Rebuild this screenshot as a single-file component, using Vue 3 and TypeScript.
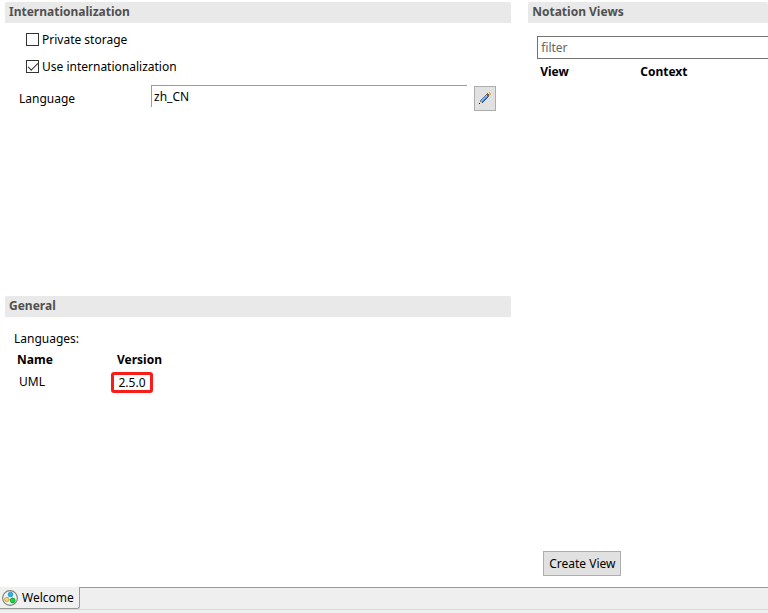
<script setup lang="ts">
import { ref } from 'vue'

interface LanguageEntry {
  name: string
  version: string
}

const privateStorage = ref(false)
const useInternationalization = ref(true)
const language = ref('zh_CN')
const filter = ref('')
const languages: LanguageEntry[] = [{ name: 'UML', version: '2.5.0' }]
</script>

<template>
  <div class="editor">
    <main class="pages">
      <div class="left">
        <section>
          <h2 class="heading">Internationalization</h2>
          <div class="form">
            <label class="check">
              <input v-model="privateStorage" type="checkbox" />
              <span>Private storage</span>
            </label>
            <label class="check">
              <input v-model="useInternationalization" type="checkbox" />
              <span>Use internationalization</span>
            </label>
            <div class="field">
              <label for="language">Language</label>
              <input id="language" v-model="language" class="language" type="text" />
              <button class="edit" type="button" aria-label="Edit language">
                <svg width="14" height="13" viewBox="0 0 14 13" shape-rendering="crispEdges">
                  <path d="M7 3h1v1h-1zM6 4h1v1h-1zM5 5h1v1h-1zM4 6h1v1h-1zM3 7h1v1h-1zM2 8h1v2h-1z" fill="#5c7fae" />
                  <path d="M8 3h1v1h-1zM7 4h2v1h-2zM6 5h2v1h-2zM5 6h2v1h-2zM4 7h2v1h-2zM3 8h2v1h-2zM3 9h1v1h-1z" fill="#7fb2e8" />
                  <path d="M9 4h1v1h-1zM8 5h1v1h-1zM7 6h1v1h-1zM6 7h1v1h-1zM5 8h1v1h-1zM4 9h1v1h-1z" fill="#4b7fd0" />
                  <path d="M9 5h1v1h-1zM8 6h1v1h-1zM7 7h1v1h-1zM6 8h1v1h-1zM5 9h1v1h-1zM4 10h1v1h-1z" fill="#27479c" />
                  <path d="M9 1h1v1h-1zM8 2h3v1h-3zM9 3h2v1h-2zM10 4h1v1h-1z" fill="#67696a" />
                  <path d="M10 0h2v1h-2zM10 1h3v1h-3zM11 2h2v1h-2zM11 3h1v1h-1zM2 10h2v1h-2z" fill="#f5b04a" />
                  <path d="M10 0h1v2h-1zM2 10h1v1h-1z" fill="#ffdf9b" />
                  <path d="M1 11h1v1h-1z" fill="#111" />
                </svg>
              </button>
            </div>
          </div>
        </section>

        <section>
          <h2 class="heading">General</h2>
          <div class="general">
            <p id="languages-title" class="caption">Languages:</p>
            <table class="grid-table" aria-labelledby="languages-title">
              <thead>
                <tr>
                  <th>Name</th>
                  <th>Version</th>
                </tr>
              </thead>
              <tbody>
                <tr v-for="entry in languages" :key="entry.name">
                  <td>{{ entry.name }}</td>
                  <td><span class="marked">{{ entry.version }}</span></td>
                </tr>
              </tbody>
            </table>
          </div>
        </section>
      </div>

      <section class="views">
        <h2 class="heading">Notation Views</h2>
        <input v-model="filter" class="filter" type="text" placeholder="filter" aria-label="filter" />
        <table class="grid-table views-table">
          <thead>
            <tr>
              <th>View</th>
              <th>Context</th>
            </tr>
          </thead>
        </table>
        <button class="create" type="button">Create View</button>
      </section>
    </main>

    <footer class="tabs">
      <div class="tab-row">
        <button class="tab" type="button">
          <svg width="16" height="16" viewBox="0 0 16 16">
            <circle cx="8" cy="8" r="7.4" fill="#e9f3f5" stroke="#7d8274" stroke-width="1.1" />
            <path d="M8.5 4.5L4.5 9.5h6.5z" fill="none" stroke="#bfd3da" />
            <circle cx="8.5" cy="4.5" r="2.3" fill="#22b4ea" stroke="#2484bb" stroke-width=".7" />
            <circle cx="4.7" cy="9.5" r="2.2" fill="#f6d676" stroke="#b8923a" stroke-width=".7" />
            <circle cx="10.7" cy="10.5" r="2.4" fill="#16d83b" stroke="#0b8f2b" stroke-width=".8" />
          </svg>
          <span>Welcome</span>
        </button>
        <div class="tab-space"></div>
      </div>
    </footer>
  </div>
</template>

<style>
body {
  margin: 0;
  background: #fff;
}
</style>

<style scoped>
.editor {
  display: flex;
  flex-direction: column;
  min-height: 100vh;
  color: #000;
  font: 12px/20px "Noto Sans", "Open Sans", sans-serif;
}

.editor *,
.editor {
  box-sizing: border-box;
}

input,
button {
  margin: 0;
  font: inherit;
  color: inherit;
  border-radius: 0;
}

.pages {
  flex: 1;
  display: grid;
  grid-template-columns: 19fr 9fr;
  gap: 17px;
  padding: 2px 0 0 5px;
}

.left {
  display: grid;
  grid-template-rows: 1fr 1fr;
  gap: 3px;
  min-width: 0;
}

.heading {
  margin: 0;
  padding: 0 4px;
  height: 21px;
  background: #e9e9e9;
  border-radius: 2px 2px 0 0;
  color: #505050;
  font-size: 12px;
  font-weight: 700;
  line-height: 20px;
}

.form {
  padding: 6px 15px 0 14px;
}

.check {
  display: flex;
  align-items: center;
  gap: 3px;
  width: max-content;
  height: 20px;
  margin: 0 0 7px 7px;
}

.check span {
  padding-top: 2px;
}

.check input {
  display: grid;
  place-items: center;
  width: 13px;
  height: 13px;
  appearance: none;
  border: 1px solid #333;
  background: #fff;
}

.check input:checked::before {
  content: "";
  width: 9px;
  height: 4px;
  border: solid #333;
  border-width: 0 0 1px 1px;
  transform: translateY(-1px) rotate(-45deg);
}

.field {
  display: grid;
  grid-template-columns: 125px 1fr 22px;
  column-gap: 7px;
  align-items: start;
  padding-top: 2px;
}

.field label {
  padding-top: 4px;
}

.language {
  width: 100%;
  height: 22px;
  padding: 0 2px;
  border: solid #9b9b9b;
  border-width: 1px 0 0 1px;
  outline: 0;
}

.edit {
  display: grid;
  place-items: center;
  width: 22px;
  height: 25px;
  margin-top: 1px;
  padding: 0;
  border: 1px solid #adadad;
  background: #e1e1e1;
}

.general {
  padding: 12px 9px 0;
}

.caption {
  margin: 0;
}

.grid-table {
  table-layout: fixed;
  width: 200px;
  border-collapse: collapse;
  text-align: left;
}

.grid-table th {
  padding: 1px 3px 0;
}

.grid-table td {
  padding: 2px 5px 0;
  vertical-align: top;
}

.grid-table td:last-child {
  padding: 2px 0 0;
}

.marked {
  display: block;
  width: 42px;
  margin-left: -3px;
  border: 3px solid #f81d16;
  border-radius: 3px;
  line-height: 15px;
  text-align: center;
}

.views {
  display: flex;
  flex-direction: column;
  align-items: flex-start;
  min-width: 0;
}

.views .heading {
  width: 100%;
}

.filter {
  align-self: stretch;
  height: 23px;
  min-width: 0;
  margin: 13px 0 0 9px;
  padding: 0 3px;
  border: solid #737373;
  border-width: 1px 0 1px 1px;
  outline: 0;
}

.filter::placeholder {
  color: #666;
  opacity: 1;
}

.views-table {
  margin: 2px 0 0 9px;
}

.create {
  height: 25px;
  margin: auto 0 11px 15px;
  padding: 0 5px;
  border: 1px solid #adadad;
  background: #e1e1e1;
  line-height: 20px;
  white-space: nowrap;
}

.tabs {
  height: 26px;
  background: #efefef;
}

.tab-row {
  display: flex;
  height: 23px;
  border-bottom: 1px solid #d9d9d9;
}

.tab {
  display: flex;
  align-items: center;
  gap: 4px;
  height: 22px;
  padding: 0 5px 0 2px;
  border: solid #999;
  border-width: 0 1px 1px 0;
  border-radius: 0 0 3px 0;
  background: #f0f0f0;
}

.tab-space {
  flex: 1;
  border-top: 1px solid #999;
}
</style>
